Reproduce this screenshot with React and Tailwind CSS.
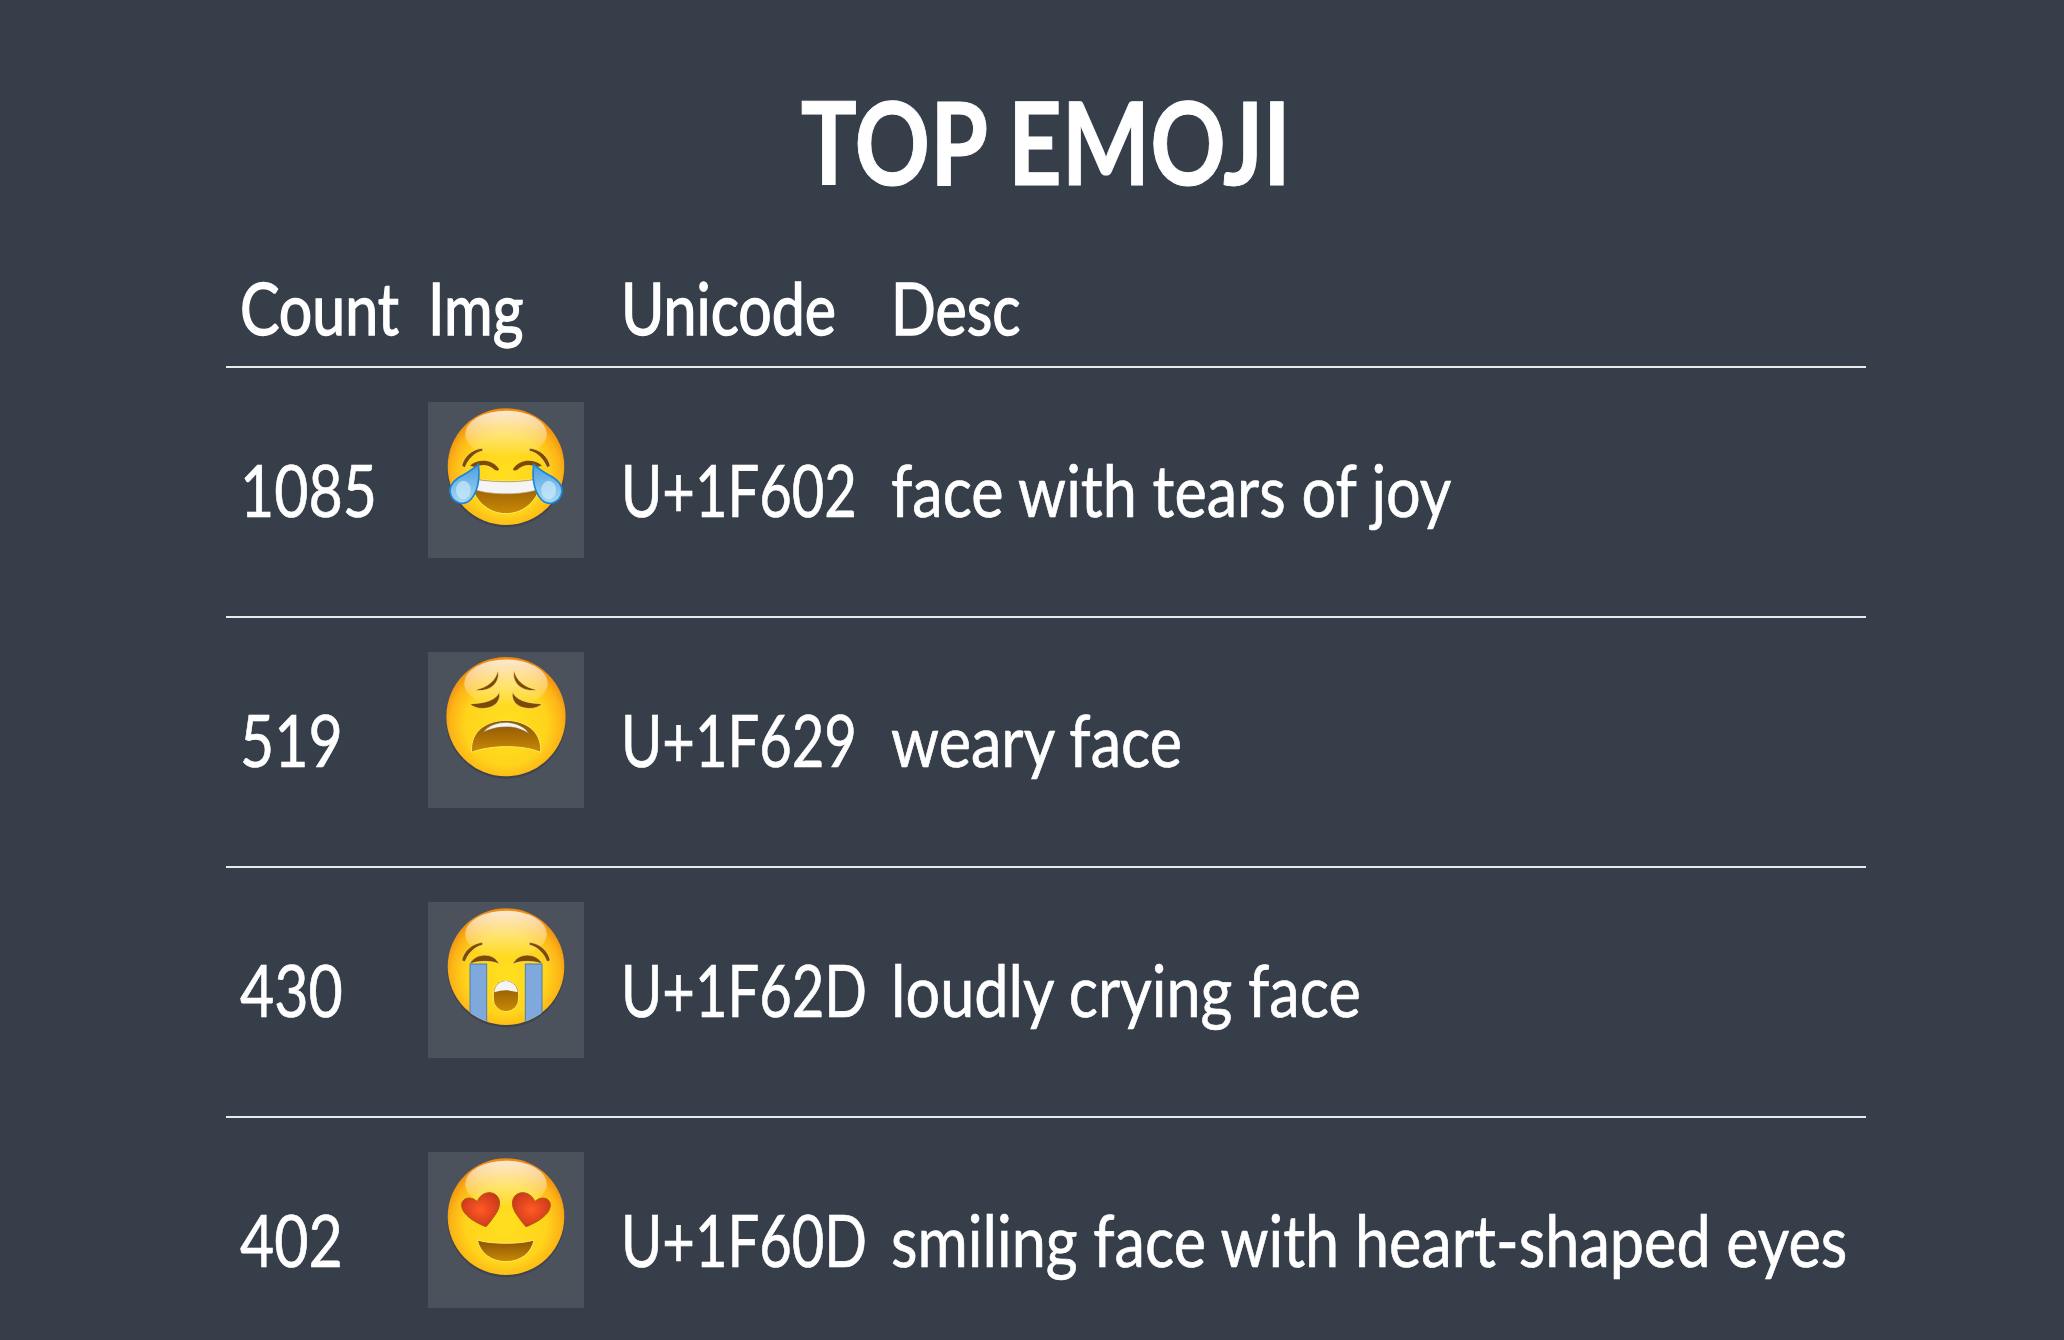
const rows = [
  { count: '1085', emoji: 'joy', code: 'U+1F602', desc: 'face with tears of joy' },
  { count: '519', emoji: 'weary', code: 'U+1F629', desc: 'weary face' },
  { count: '430', emoji: 'sob', code: 'U+1F62D', desc: 'loudly crying face' },
  { count: '402', emoji: 'hearts', code: 'U+1F60D', desc: 'smiling face with heart-shaped eyes' },
]

function Squeezed({ children }) {
  return <span className="inline-block origin-left scale-x-[0.82] whitespace-nowrap">{children}</span>
}

function Code({ children }) {
  return <span className="inline-block origin-left scale-x-[0.78] whitespace-nowrap">{children}</span>
}

function Desc({ children }) {
  return <span className="inline-block origin-left scale-x-[0.85] whitespace-nowrap">{children}</span>
}

function Face({ id, r = 175, children }) {
  return (
    <svg viewBox="24 21 468 468" className="w-[156px] h-[156px] block">
      <defs>
        <radialGradient id={`${id}-face`} cx="258" cy="238" r={r + 25} gradientUnits="userSpaceOnUse">
          <stop offset="0" stopColor="#ffdf20" />
          <stop offset="0.6" stopColor="#ffd41b" />
          <stop offset="0.82" stopColor="#fdb417" />
          <stop offset="1" stopColor="#ea850f" />
        </radialGradient>
        <linearGradient id={`${id}-shine`} x1="0" y1="0" x2="0" y2="1">
          <stop offset="0" stopColor="#ffffff" stopOpacity="0.8" />
          <stop offset="1" stopColor="#ffffff" stopOpacity="0" />
        </linearGradient>
        <linearGradient id={`${id}-mouth`} x1="0" y1="0" x2="0" y2="1">
          <stop offset="0" stopColor="#8a5203" />
          <stop offset="1" stopColor="#c98a07" />
        </linearGradient>
        <linearGradient id={`${id}-tear`} x1="0" y1="0" x2="0" y2="1">
          <stop offset="0" stopColor="#4a9fe0" />
          <stop offset="1" stopColor="#a6d8f5" />
        </linearGradient>
        <radialGradient id={`${id}-heart`} cx="0.5" cy="0.5" r="0.6">
          <stop offset="0" stopColor="#ff5a24" />
          <stop offset="1" stopColor="#c8351a" />
        </radialGradient>
        <clipPath id={`${id}-clip`}>
          <circle cx="258" cy="215" r={r} />
        </clipPath>
      </defs>
      <circle cx="258" cy="221" r={r + 1} fill="#2f343b" opacity="0.45" />
      <circle cx="258" cy="215" r={r} fill={`url(#${id}-face)`} />
      <ellipse cx="258" cy={215 - r * 0.56} rx={r * 0.7} ry={r * 0.4} fill={`url(#${id}-shine)`} />
      {children}
    </svg>
  )
}

const brown = '#7d4a05'

function Joy() {
  const tear = 'M175 208 C180 250 172 288 155 310 C135 336 95 326 90 290 C88 264 110 250 130 240 C150 228 165 218 175 208Z'
  return (
    <Face id="joy">
      <path d="M125 213 C132 185 155 162 188 160 L188 168 C165 172 146 190 135 218Z" fill={brown} stroke="#ffe27a" strokeWidth="2" />
      <path d="M391 213 C384 185 361 162 328 160 L328 168 C351 172 370 190 381 218Z" fill={brown} stroke="#ffe27a" strokeWidth="2" />
      <path d="M150 212 C172 192 215 190 237 222 C236 228 228 227 224 224 C208 208 185 206 165 216Z" fill={brown} />
      <path d="M366 212 C344 192 301 190 279 222 C280 228 288 227 292 224 C308 208 331 206 351 216Z" fill={brown} />
      <path d="M150 246 C210 262 306 262 366 246 C362 310 315 356 258 356 C201 356 154 310 150 246Z" fill="url(#joy-mouth)" stroke="#ffe95c" strokeWidth="3" />
      <path d="M152 250 C210 264 306 264 364 250 C360 270 354 282 346 286 C300 300 216 300 170 286 C162 282 156 270 152 250Z" fill="#f4f4f4" stroke="#b9a77a" strokeWidth="2" />
      <path d={tear} fill="url(#joy-tear)" stroke="#1d86d8" strokeWidth="5" />
      <path d={tear} transform="translate(516 0) scale(-1 1)" fill="url(#joy-tear)" stroke="#1d86d8" strokeWidth="5" />
      <ellipse cx="130" cy="285" rx="22" ry="28" fill="#cdeafb" opacity="0.7" />
      <ellipse cx="386" cy="285" rx="22" ry="28" fill="#cdeafb" opacity="0.7" />
    </Face>
  )
}

function Weary() {
  return (
    <Face id="weary" r={179}>
      <path d="M233 77 C228 105 205 126 167 134 C176 140 205 136 220 122 C234 108 238 92 233 77Z" fill={brown} stroke="#ffe27a" strokeWidth="2" />
      <path d="M283 77 C288 105 311 126 349 134 C340 140 311 136 296 122 C282 108 278 92 283 77Z" fill={brown} stroke="#ffe27a" strokeWidth="2" />
      <path d="M238 140 C230 165 195 175 150 176 C165 196 215 196 232 172 C240 160 240 150 238 140Z" fill={brown} stroke="#ffe27a" strokeWidth="2" />
      <path d="M278 140 C286 165 321 175 366 176 C351 196 301 196 284 172 C276 160 276 150 278 140Z" fill={brown} stroke="#ffe27a" strokeWidth="2" />
      <path d="M155 322 C150 270 185 228 258 226 C331 228 366 270 362 322 C330 308 290 305 258 305 C226 305 185 310 155 322Z" fill="url(#weary-mouth)" stroke="#ffe95c" strokeWidth="3" />
      <path d="M190 262 C205 240 235 232 258 232 C285 232 315 245 328 266 C300 250 280 245 258 246 C230 246 210 252 190 262Z" fill="#f4f4f4" stroke="#8a6a2a" strokeWidth="2" />
    </Face>
  )
}

function Sob() {
  return (
    <Face id="sob">
      <path d="M125 197 C130 170 155 145 188 142 L188 150 C165 155 146 172 135 200Z" fill={brown} stroke="#ffe27a" strokeWidth="2" />
      <path d="M391 197 C386 170 361 145 328 142 L328 150 C351 155 370 172 381 200Z" fill={brown} stroke="#ffe27a" strokeWidth="2" />
      <path d="M148 208 C165 172 222 170 238 208 C220 196 170 196 148 208Z" fill={brown} stroke="#ffe27a" strokeWidth="2" />
      <path d="M368 208 C351 172 294 170 278 208 C296 196 346 196 368 208Z" fill={brown} stroke="#ffe27a" strokeWidth="2" />
      <g clipPath="url(#sob-clip)">
        <rect x="150" y="207" width="50" height="190" fill="#7fa9dc" stroke="#4e7fb0" strokeWidth="3" />
        <rect x="316" y="207" width="50" height="190" fill="#7fa9dc" stroke="#4e7fb0" strokeWidth="3" />
      </g>
      <rect x="220" y="256" width="76" height="94" rx="38" fill="url(#sob-mouth)" stroke="#ffe95c" strokeWidth="3" />
      <path d="M223 292 C225 270 240 258 258 258 C276 258 291 270 293 292 C270 284 246 284 223 292Z" fill="#f4f4f4" />
    </Face>
  )
}

function Hearts() {
  const heart = 'M198 245 C170 235 125 210 125 180 C125 160 150 150 172 170 C180 145 210 135 228 150 C245 165 240 190 225 210 C215 225 205 238 198 245Z'
  return (
    <Face id="hearts">
      <path d={heart} fill="url(#hearts-heart)" stroke="#a85a08" strokeWidth="3" />
      <path d={heart} transform="translate(516 0) scale(-1 1)" fill="url(#hearts-heart)" stroke="#a85a08" strokeWidth="3" />
      <path d="M172 285 C210 298 305 298 342 285 C335 325 300 350 258 350 C215 350 180 325 172 285Z" fill="url(#hearts-mouth)" stroke="#ffe95c" strokeWidth="3" />
    </Face>
  )
}

const emojis = { joy: Joy, weary: Weary, sob: Sob, hearts: Hearts }

function App() {
  return (
    <div className="h-[1340px] overflow-hidden bg-[#363e49] text-white font-['Lato',sans-serif]">
      <div className="ml-[226px] w-[1640px]">
        <h1 className="pt-[84px] text-center text-[114px] leading-none font-bold [-webkit-text-stroke:1px_white]">
          <span className="inline-block scale-x-[0.82] whitespace-nowrap">TOP EMOJI</span>
        </h1>
        <div className="mt-[73px] text-[72px] leading-none [-webkit-text-stroke:0.7px_white]">
          <div className="grid grid-cols-[188px_193px_270px_1fr] h-[97px] border-b-2 border-[#e8e9ea] [-webkit-text-stroke:1.4px_white]">
            <div className="pl-[14px]"><Squeezed>Count</Squeezed></div>
            <div className="pl-[14px]"><Squeezed>Img</Squeezed></div>
            <div className="pl-[14px]"><Squeezed>Unicode</Squeezed></div>
            <div className="pl-[14px]"><Squeezed>Desc</Squeezed></div>
          </div>
          {rows.map((row) => {
            const Emoji = emojis[row.emoji]
            return (
              <div key={row.code} className="grid grid-cols-[188px_193px_270px_1fr] h-[250px] border-b-2 border-[#e8e9ea] last:border-b-0">
                <div className="pl-[14px] pt-[85px]"><Squeezed>{row.count}</Squeezed></div>
                <div className="pl-[14px] pt-[34px]">
                  <div className="w-[156px] h-[156px] bg-[#4b525b]">
                    <Emoji />
                  </div>
                </div>
                <div className="pl-[14px] pt-[85px]"><Code>{row.code}</Code></div>
                <div className="pl-[14px] pt-[85px]"><Desc>{row.desc}</Desc></div>
              </div>
            )
          })}
        </div>
      </div>
    </div>
  )
}

export default App
